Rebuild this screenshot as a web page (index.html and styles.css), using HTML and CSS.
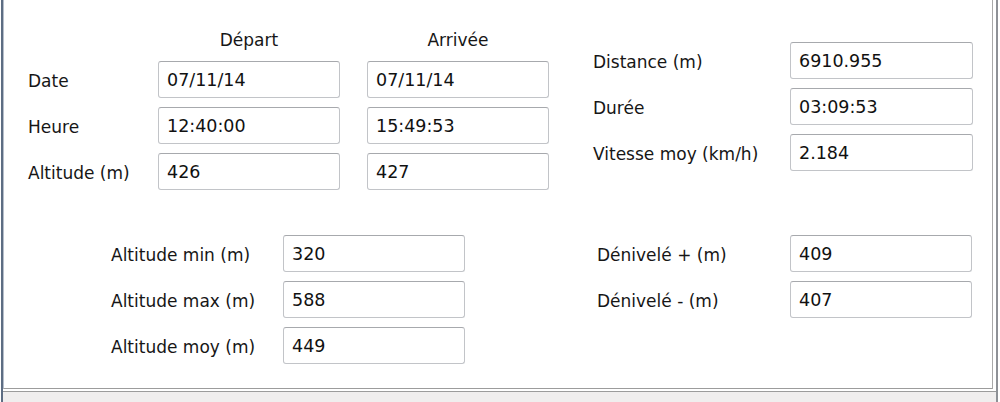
FILE: index.html
```html
<!DOCTYPE html>
<html>
  <head>
    <title>Statistiques du parcours</title>
    <link rel="stylesheet" href="styles.css">
  </head>
  <body>
    <div class="frame">
      <main class="panel">
        <section class="top">
          <div class="group trip">
            <span></span>
            <span class="head">Départ</span>
            <span class="head">Arrivée</span>

            <label>Date</label>
            <div class="field">07/11/14</div>
            <div class="field">07/11/14</div>

            <label>Heure</label>
            <div class="field">12:40:00</div>
            <div class="field">15:49:53</div>

            <label>Altitude (m)</label>
            <div class="field">426</div>
            <div class="field">427</div>
          </div>

          <div class="group totals">
            <label>Distance (m)</label>
            <div class="field">6910.955</div>

            <label>Durée</label>
            <div class="field">03:09:53</div>

            <label>Vitesse moy (km/h)</label>
            <div class="field">2.184</div>
          </div>
        </section>

        <section class="bottom">
          <div class="group heights">
            <label>Altitude min (m)</label>
            <div class="field">320</div>

            <label>Altitude max (m)</label>
            <div class="field">588</div>

            <label>Altitude moy (m)</label>
            <div class="field">449</div>
          </div>

          <div class="group climb">
            <label>Dénivelé + (m)</label>
            <div class="field">409</div>

            <label>Dénivelé - (m)</label>
            <div class="field">407</div>
          </div>
        </section>
      </main>
      <div class="status"></div>
    </div>
  </body>
</html>
```

FILE: styles.css
```css
* {
  box-sizing: border-box;
  font-family: "DejaVu Sans", Verdana, sans-serif;
}
body {
  margin: 0;
  background: #ffffff;
}
.frame {
  margin-left: 1px;
  width: 997px;
  height: 402px;
  display: flex;
  flex-direction: column;
  border-left: 2px solid #5d6d83;
  border-right: 2px solid #8e9196;
  background: #ffffff;
  overflow: hidden;
}
.panel {
  height: 389px;
  margin-right: 3px;
  border-left: 1px solid #b7bfcb;
  border-right: 1px solid #a9a9a9;
  border-bottom: 1px solid #9c9c9c;
  background: #ffffff;
}
.status {
  flex: 1;
  margin-top: 2px;
  border-top: 1px solid #9c9c9c;
  background: #f0eeee;
}
.top,
.bottom {
  display: flex;
  align-items: flex-start;
}
.group {
  display: grid;
  row-gap: 9px;
  grid-auto-rows: 37px;
  align-items: center;
  font-size: 17px;
  color: #161616;
}
.trip {
  margin: 28px 0 0 24px;
  grid-template-columns: 103px 182px 182px;
  grid-template-rows: 24px;
  column-gap: 27px;
}
.totals {
  margin: 42px 0 0 44px;
  grid-template-columns: 197px 183px;
}
.bottom {
  margin-top: 45px;
}
.heights {
  margin-left: 107px;
  grid-template-columns: 172px 182px;
}
.climb {
  margin-left: 132px;
  grid-template-columns: 193px 182px;
}
.head {
  text-align: center;
}
label {
  padding-top: 2px;
  white-space: nowrap;
}
.field {
  height: 37px;
  display: flex;
  align-items: center;
  padding: 0 8px;
  border: 1px solid #c2c4c8;
  border-top-color: #a7a9ad;
  border-radius: 3px;
  background: #ffffff;
  font-size: 17.5px;
  color: #111111;
}
```
